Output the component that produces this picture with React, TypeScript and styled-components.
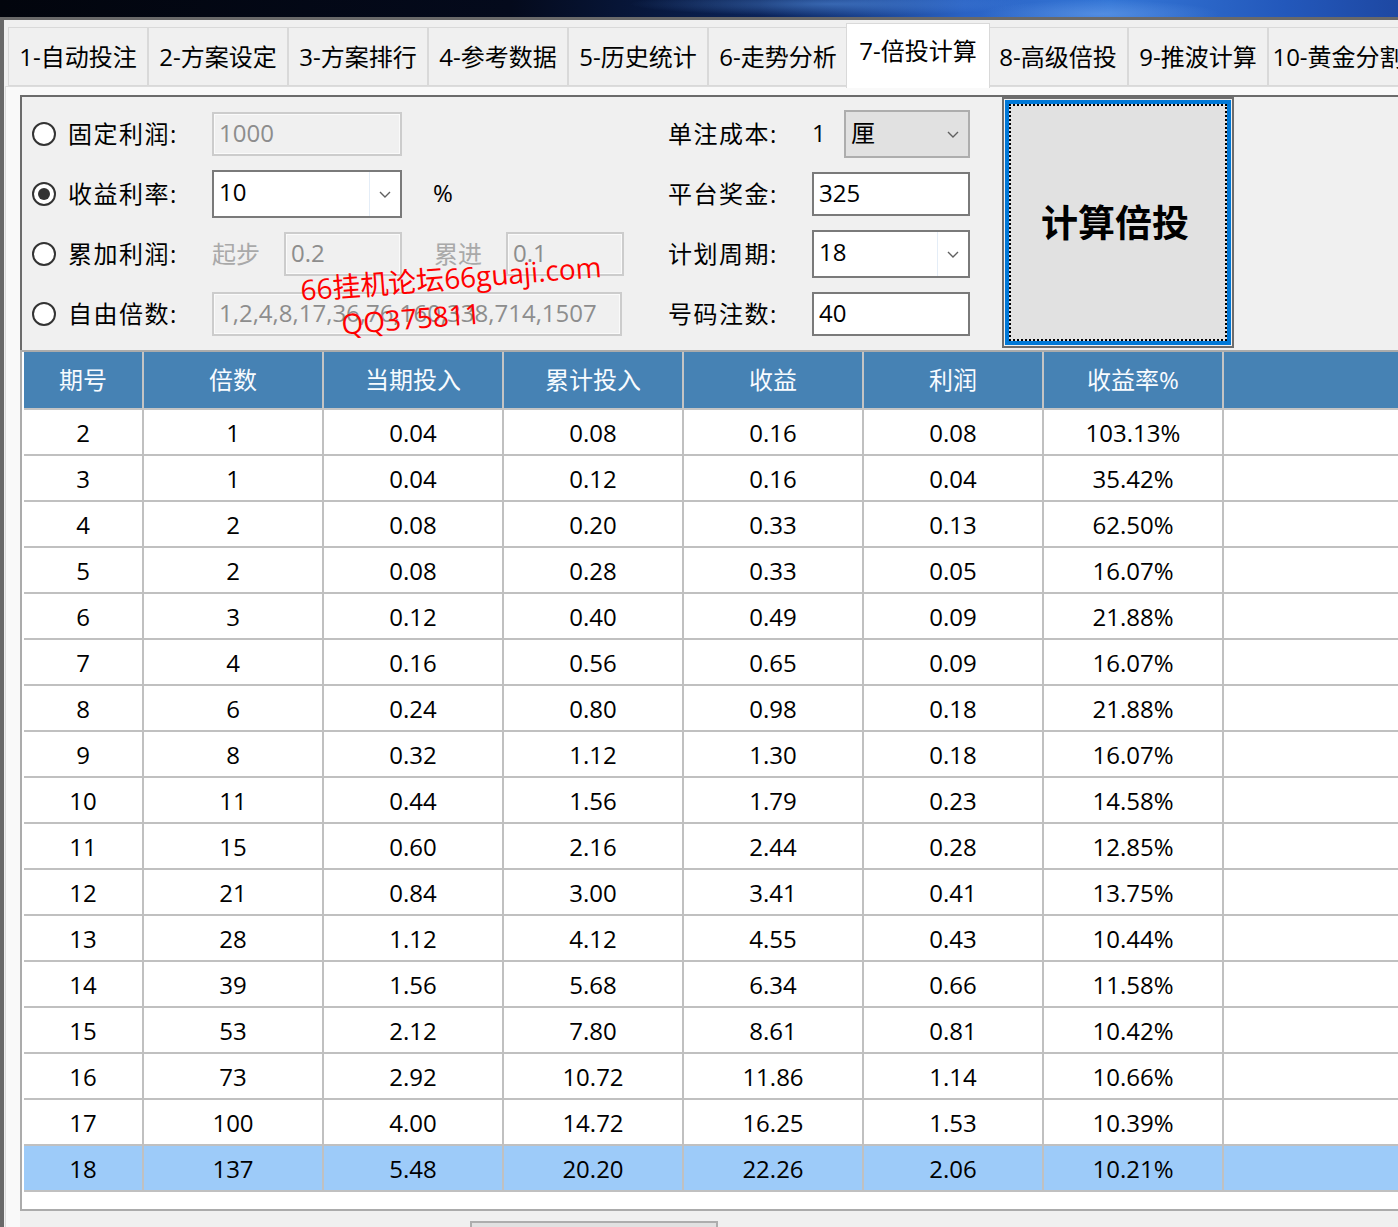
import React from "react";
import styled, { createGlobalStyle } from "styled-components";

const GlobalStyle = createGlobalStyle`
  html, body {
    margin: 0;
    padding: 0;
    background: #f0f0f0;
    overflow: hidden;
  }
  body {
    font-family: "Open Sans", "Noto Sans CJK SC", sans-serif;
    color: #000;
  }
  * { box-sizing: border-box; }
`;

const tabs = [
  "1-自动投注",
  "2-方案设定",
  "3-方案排行",
  "4-参考数据",
  "5-历史统计",
  "6-走势分析",
  "7-倍投计算",
  "8-高级倍投",
  "9-推波计算",
  "10-黄金分割",
];

const columns = ["期号", "倍数", "当期投入", "累计投入", "收益", "利润", "收益率%", ""];

const rows = [
  ["2", "1", "0.04", "0.08", "0.16", "0.08", "103.13%"],
  ["3", "1", "0.04", "0.12", "0.16", "0.04", "35.42%"],
  ["4", "2", "0.08", "0.20", "0.33", "0.13", "62.50%"],
  ["5", "2", "0.08", "0.28", "0.33", "0.05", "16.07%"],
  ["6", "3", "0.12", "0.40", "0.49", "0.09", "21.88%"],
  ["7", "4", "0.16", "0.56", "0.65", "0.09", "16.07%"],
  ["8", "6", "0.24", "0.80", "0.98", "0.18", "21.88%"],
  ["9", "8", "0.32", "1.12", "1.30", "0.18", "16.07%"],
  ["10", "11", "0.44", "1.56", "1.79", "0.23", "14.58%"],
  ["11", "15", "0.60", "2.16", "2.44", "0.28", "12.85%"],
  ["12", "21", "0.84", "3.00", "3.41", "0.41", "13.75%"],
  ["13", "28", "1.12", "4.12", "4.55", "0.43", "10.44%"],
  ["14", "39", "1.56", "5.68", "6.34", "0.66", "11.58%"],
  ["15", "53", "2.12", "7.80", "8.61", "0.81", "10.42%"],
  ["16", "73", "2.92", "10.72", "11.86", "1.14", "10.66%"],
  ["17", "100", "4.00", "14.72", "16.25", "1.53", "10.39%"],
  ["18", "137", "5.48", "20.20", "22.26", "2.06", "10.21%"],
];

const Chevron: React.FC = () => (
  <svg width="12" height="7" viewBox="0 0 12 7">
    <path d="M1 1 L6 6 L11 1" stroke="#606060" strokeWidth="1.4" fill="none" />
  </svg>
);

interface ComboProps {
  value: string;
  width: number;
  disabled?: boolean;
}

const Combo: React.FC<ComboProps> = ({ value, width, disabled }) => (
  <ComboBox $width={width} $disabled={disabled}>
    <ComboValue>{value}</ComboValue>
    <DropButton $disabled={disabled}>
      <Chevron />
    </DropButton>
  </ComboBox>
);

export default function App() {
  return (
    <>
      <GlobalStyle />
      <Window>
        <TitleBar />
        <Frame>
          <TabStrip>
            {tabs.map((t) => (
              <Tab key={t} $active={t.startsWith("7-")}>
                {t}
              </Tab>
            ))}
          </TabStrip>
          <TabPage>
            <SettingsPanel>
              <FieldsBlock>
                <FormRow>
                  <Radio />
                  <FieldLabel $width={144}>固定利润:</FieldLabel>
                  <TextBox $width={190} $disabled>1000</TextBox>
                </FormRow>
                <FormRow>
                  <Radio $checked />
                  <FieldLabel $width={144}>收益利率:</FieldLabel>
                  <Combo value="10" width={190} />
                  <Unit>%</Unit>
                </FormRow>
                <FormRow>
                  <Radio />
                  <FieldLabel $width={144}>累加利润:</FieldLabel>
                  <SubLabel>起步</SubLabel>
                  <TextBox $width={118} $disabled>0.2</TextBox>
                  <SubLabel $gap={32}>累进</SubLabel>
                  <TextBox $width={118} $disabled>0.1</TextBox>
                </FormRow>
                <FormRow>
                  <Radio />
                  <FieldLabel $width={144}>自由倍数:</FieldLabel>
                  <TextBox $width={410} $disabled>1,2,4,8,17,36,76,160,338,714,1507</TextBox>
                </FormRow>
              </FieldsBlock>

              <CostBlock>
                <FormRow>
                  <FieldLabel $width={144}>单注成本:</FieldLabel>
                  <PlainValue>1</PlainValue>
                  <Combo value="厘" width={126} disabled />
                </FormRow>
                <FormRow>
                  <FieldLabel $width={144}>平台奖金:</FieldLabel>
                  <TextBox $width={158}>325</TextBox>
                </FormRow>
                <FormRow>
                  <FieldLabel $width={144}>计划周期:</FieldLabel>
                  <Combo value="18" width={158} />
                </FormRow>
                <FormRow>
                  <FieldLabel $width={144}>号码注数:</FieldLabel>
                  <TextBox $width={158}>40</TextBox>
                </FormRow>
              </CostBlock>

              <CalcButton>
                <CalcInner>
                  <CalcFocus>计算倍投</CalcFocus>
                </CalcInner>
              </CalcButton>

              <Watermark $left={278} $top={161} $width={296}>
                66挂机论坛66guaji.com
              </Watermark>
              <Watermark $left={319} $top={201} $width={140}>
                QQ375811
              </Watermark>
            </SettingsPanel>

            <Grid>
              <GridTable>
                {columns.map((c, i) => (
                  <HeadCell key={i}>{c}</HeadCell>
                ))}
                {rows.map((r, ri) => {
                  const selected = ri === rows.length - 1;
                  return (
                    <React.Fragment key={ri}>
                      {r.map((v, ci) => (
                        <Cell key={ci} $selected={selected}>
                          {v}
                        </Cell>
                      ))}
                      <Cell $selected={selected} />
                    </React.Fragment>
                  );
                })}
              </GridTable>
            </Grid>

            <BottomBar>
              <BottomButton />
            </BottomBar>
          </TabPage>
        </Frame>
      </Window>
    </>
  );
}

const Window = styled.div`
  width: 1460px;
  height: 1227px;
  display: flex;
  flex-direction: column;
  background: #f0f0f0;
`;

const TitleBar = styled.div`
  height: 17px;
  flex-shrink: 0;
  background:
    radial-gradient(ellipse 120px 14px at 1100px 14px, rgba(120, 170, 240, 0.45), transparent),
    radial-gradient(ellipse 200px 12px at 830px 4px, rgba(90, 150, 230, 0.5), transparent),
    linear-gradient(90deg, #02050d 0%, #040a1c 35%, #0b2358 52%, #2a62c4 66%, #3476d6 76%, #2358bb 88%, #1b3f95 100%);
`;

const Frame = styled.div`
  flex: 1;
  display: flex;
  flex-direction: column;
  border-top: 3px solid #696969;
  border-left: 4px solid #696969;
`;

const TabStrip = styled.div`
  height: 66px;
  flex-shrink: 0;
  display: flex;
  align-items: flex-start;
  padding: 7px 0 0 4px;
`;

const Tab = styled.div<{ $active?: boolean }>`
  flex-shrink: 0;
  width: ${(p) => (p.$active ? 144 : 140)}px;
  height: ${(p) => (p.$active ? 65 : 59)}px;
  margin: ${(p) => (p.$active ? "-4px -2px 0" : "0")};
  padding-bottom: ${(p) => (p.$active ? 13 : 3)}px;
  position: relative;
  z-index: ${(p) => (p.$active ? 1 : 0)};
  display: flex;
  align-items: center;
  justify-content: center;
  white-space: nowrap;
  font-size: 24px;
  background: ${(p) => (p.$active ? "#ffffff" : "#f0f0f0")};
  border: 1px solid #d9d9d9;
  border-bottom: ${(p) => (p.$active ? "none" : "1px solid #d9d9d9")};
`;

const TabPage = styled.div`
  flex: 1;
  display: flex;
  flex-direction: column;
  margin-left: 1px;
  border-top: 1px solid #dcdcdc;
  border-left: 1px solid #dcdcdc;
  background: #f9f9f9;
  padding: 8px 0 0 14px;
`;

const SettingsPanel = styled.div`
  position: relative;
  height: 255px;
  flex-shrink: 0;
  display: flex;
  align-items: flex-start;
  background: #f0f0f0;
  border-top: 2px solid #6b6b6b;
  border-left: 2px solid #6b6b6b;
`;

const FieldsBlock = styled.div`
  width: 646px;
  margin-top: 7px;
  padding-left: 10px;
  display: flex;
  flex-direction: column;
`;

const CostBlock = styled.div`
  width: 302px;
  margin-top: 7px;
  display: flex;
  flex-direction: column;
`;

const FormRow = styled.div`
  height: 60px;
  display: flex;
  align-items: center;
`;

const Radio = styled.span<{ $checked?: boolean }>`
  width: 24px;
  height: 24px;
  flex-shrink: 0;
  margin-right: 12px;
  border-radius: 50%;
  border: 2px solid #333;
  background: #fff;
  display: flex;
  align-items: center;
  justify-content: center;
  &::after {
    content: "";
    display: ${(p) => (p.$checked ? "block" : "none")};
    width: 12px;
    height: 12px;
    border-radius: 50%;
    background: #333;
  }
`;

const FieldLabel = styled.span<{ $width: number }>`
  width: ${(p) => p.$width}px;
  flex-shrink: 0;
  font-size: 24px;
  letter-spacing: 1.5px;
  white-space: nowrap;
  padding-bottom: 3px;
`;

const SubLabel = styled.span<{ $gap?: number }>`
  width: 72px;
  margin-left: ${(p) => p.$gap ?? 0}px;
  flex-shrink: 0;
  font-size: 24px;
  color: #a9a9a9;
  padding-bottom: 3px;
`;

const Unit = styled.span`
  margin-left: 31px;
  font-size: 24px;
  padding-bottom: 3px;
`;

const PlainValue = styled.span`
  width: 32px;
  flex-shrink: 0;
  font-size: 24px;
  padding-bottom: 3px;
`;

const TextBox = styled.div<{ $width: number; $disabled?: boolean }>`
  width: ${(p) => p.$width}px;
  height: 44px;
  flex-shrink: 0;
  display: flex;
  align-items: center;
  padding: 0 0 3px 5px;
  font-size: 24px;
  white-space: nowrap;
  overflow: hidden;
  color: ${(p) => (p.$disabled ? "#8d8d8d" : "#000")};
  background: ${(p) => (p.$disabled ? "#f0f0f0" : "#fff")};
  border: 2px solid ${(p) => (p.$disabled ? "#cccccc" : "#7a7a7a")};
  box-shadow: ${(p) => (p.$disabled ? "inset 0 0 0 1px #fafafa" : "none")};
`;

const ComboBox = styled.div<{ $width: number; $disabled?: boolean }>`
  width: ${(p) => p.$width}px;
  height: 48px;
  flex-shrink: 0;
  display: flex;
  align-items: stretch;
  font-size: 24px;
  background: ${(p) => (p.$disabled ? "#e1e1e1" : "#fff")};
  border: 2px solid ${(p) => (p.$disabled ? "#adadad" : "#7a7a7a")};
`;

const ComboValue = styled.span`
  flex: 1;
  display: flex;
  align-items: center;
  padding: 0 0 5px 5px;
`;

const DropButton = styled.span<{ $disabled?: boolean }>`
  width: 31px;
  display: flex;
  align-items: center;
  justify-content: center;
  border-left: 1px solid ${(p) => (p.$disabled ? "transparent" : "#e4edf7")};
`;

const CalcButton = styled.div`
  width: 232px;
  height: 251px;
  margin-left: 32px;
  flex-shrink: 0;
  padding: 1px;
  background: #f0f0f0;
  border: 2px solid #6d6d6d;
`;

const CalcInner = styled.div`
  height: 100%;
  border: 4px solid #0078d7;
`;

const CalcFocus = styled.div`
  height: 100%;
  border: 2px dotted #000;
  background: #e1e1e1;
  display: flex;
  align-items: center;
  justify-content: center;
  font-family: "Noto Sans CJK SC", sans-serif;
  font-size: 37px;
  font-weight: 700;
  padding: 0 6px 4px 0;
`;

const Watermark = styled.span<{ $left: number; $top: number; $width: number }>`
  position: absolute;
  left: ${(p) => p.$left}px;
  top: ${(p) => p.$top}px;
  width: ${(p) => p.$width}px;
  line-height: 40px;
  text-align: center;
  white-space: nowrap;
  font-size: 28px;
  color: #ff0000;
  transform: rotate(-4.5deg);
  pointer-events: none;
`;

const Grid = styled.div`
  height: 861px;
  flex-shrink: 0;
  background: #fff;
  border: 2px solid #ababab;
  border-right: none;
  padding-left: 2px;
  overflow: hidden;
`;

const GridTable = styled.div`
  display: grid;
  grid-template-columns: 120px repeat(6, 180px) 1fr;
`;

const HeadCell = styled.div`
  height: 58px;
  display: flex;
  align-items: center;
  justify-content: center;
  font-size: 24px;
  color: #f7fbff;
  background: #4682b4;
  border-right: 2px solid #c4c4c4;
  border-bottom: 2px solid #c4c4c4;
  padding-bottom: 3px;
`;

const Cell = styled.div<{ $selected?: boolean }>`
  height: 46px;
  display: flex;
  align-items: center;
  justify-content: center;
  font-size: 24px;
  background: ${(p) => (p.$selected ? "#9dcbf9" : "#fff")};
  border-right: 2px solid #c0c0c0;
  border-bottom: 2px solid #c0c0c0;
`;

const BottomBar = styled.div`
  flex: 1;
  background: #f0f0f0;
  padding: 10px 0 0 450px;
`;

const BottomButton = styled.div`
  width: 248px;
  height: 30px;
  border: 2px solid #adadad;
  background: #e1e1e1;
`;
